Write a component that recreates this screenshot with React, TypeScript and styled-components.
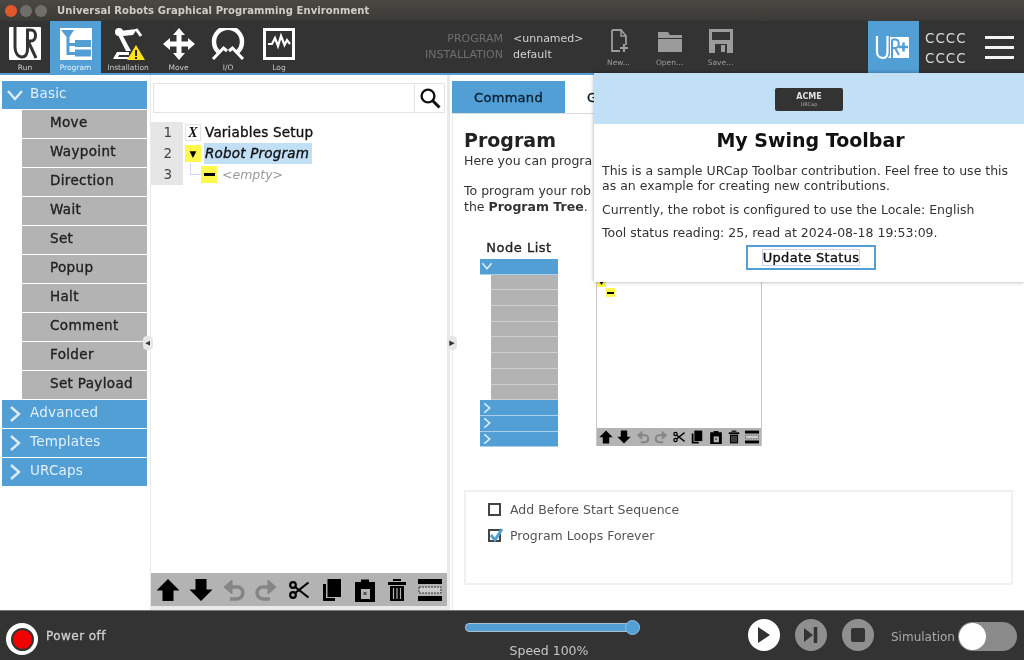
import React from "react";
import styled, { createGlobalStyle } from "styled-components";

const blue = "#529fd6";
const lightBlue = "#c1dff5";
const dark = "#333333";
const gray = "#b3b3b3";

const Global = createGlobalStyle`
  html, body {
    margin: 0;
    padding: 0;
    width: 1024px;
    height: 660px;
    overflow: hidden;
    background: #fff;
  }
  * { box-sizing: border-box; }
`;

const basicItems = ["Move", "Waypoint", "Direction", "Wait", "Set", "Popup", "Halt", "Comment", "Folder", "Set Payload"];
const closedGroups = ["Advanced", "Templates", "URCaps"];

const Chevron = ({ open, size = 18 }: { open?: boolean; size?: number }) => (
  <svg width={size} height={size} viewBox="0 0 18 18" fill="none" stroke="#dcedf9" strokeWidth="2.4">
    <path d={open ? "M2 5 L9 13 L16 5" : "M5 2 L13 9 L5 16"} />
  </svg>
);

const ToolIcon = ({ name, size }: { name: string; size: number }) => {
  const shapes: Record<string, React.ReactNode> = {
    up: <path d="M12 1 L23.5 12.5 H17.5 V23 H6.5 V12.5 H.5Z" fill="#000" />,
    down: <path d="M12 23 L23.5 11.5 H17.5 V1 H6.5 V11.5 H.5Z" fill="#000" />,
    undo: (
      <g fill="none" stroke="#858585">
        <path d="M7 9 H15 C23 9 23 21 14 21 H8" strokeWidth="3.6" />
        <path d="M10 2 L2 9 L10 16Z" fill="#858585" strokeWidth="1" />
      </g>
    ),
    redo: (
      <g fill="none" stroke="#858585">
        <path d="M17 9 H9 C1 9 1 21 10 21 H16" strokeWidth="3.6" />
        <path d="M14 2 L22 9 L14 16Z" fill="#858585" strokeWidth="1" />
      </g>
    ),
    cut: (
      <g fill="none" stroke="#000" strokeWidth="2.2">
        <circle cx="6" cy="7" r="2.8" />
        <circle cx="6" cy="17" r="2.8" />
        <path d="M8.2 9 L21.5 19.5 M8.2 15 L21.5 4.5" />
      </g>
    ),
    copy: (
      <g>
        <path d="M3 6 H6 V20 H15 V23 H3Z" fill="#000" />
        <rect x="7.5" y="1" width="13.5" height="18" fill="#000" />
      </g>
    ),
    paste: (
      <g>
        <path d="M2 4 H8 V1.5 H16 V4 H22 V24 H2Z" fill="#000" />
        <rect x="8" y="11" width="9" height="10" fill={gray} />
        <rect x="10.5" y="14" width="3" height="3" fill="#555" />
      </g>
    ),
    trash: (
      <g fill="#000">
        <rect x="8" y="1" width="8" height="2" />
        <rect x="3" y="4" width="18" height="3" />
        <path d="M5 8 H19 V23 H5Z" />
        <path d="M8.5 10 V21 M12 10 V21 M15.5 10 V21" stroke={gray} strokeWidth="1.2" />
      </g>
    ),
    suppress: (
      <g>
        <rect x="0" y="1" width="24" height="5" fill="#000" />
        <rect x="1" y="9" width="22" height="6" fill="#ccc" stroke="#333" strokeDasharray="2 1" strokeWidth="1" />
        <rect x="0" y="18" width="24" height="5" fill="#000" />
      </g>
    ),
  };
  return (
    <svg width={size} height={size} viewBox="0 0 24 24">
      {shapes[name]}
    </svg>
  );
};

const toolNames = ["up", "down", "undo", "redo", "cut", "copy", "paste", "trash", "suppress"];

const UrLogo = ({ plus }: { plus?: boolean }) => {
  return plus ? (
    <svg width="34" height="25" viewBox="0 0 34 25">
      <path d="M2 1 V17 C2 21 5 23 8 23 C11 23 12.5 21 12.5 17 V1" fill="none" stroke="#fff" strokeWidth="2.2" />
      <path d="M15 2 H33 a1 1 0 0 1 1 1 V23 H13 C15 21 15 19 15 17Z" fill="#fff" />
      <path d="M17 4.5 V23 M17 4.5 H20 C25 4.5 25 13 20 13 H17 M20 13 L24 20" fill="none" stroke={blue} strokeWidth="2" />
      <path d="M28.5 7.5 V16.5 M24 12 H33" stroke={blue} strokeWidth="2.6" />
    </svg>
  ) : (
    <svg width="32" height="33" viewBox="0 0 32 33">
      <rect width="32" height="33" rx="1" fill="#fff" />
      <path d="M6 0 V20 C6 26 9 30 13 30 C17 30 18.5 26 18.5 22 V3 H22 C28 3 28 14 22 14 H19 L27 31" fill="none" stroke={dark} strokeWidth="3" />
    </svg>
  );
};

const ProgramGlyph = () => (
  <svg width="32" height="32" viewBox="0 0 32 32">
    <rect width="32" height="32" fill="#fff" />
    <path d="M1 2 H14 L9.5 9 V15 H15 V18 H9.5 V24 H15 V27 H6.5 V9Z" fill={blue} />
    <rect x="15" y="12" width="16" height="7" fill={blue} />
    <rect x="15" y="21.5" width="16" height="7" fill={blue} />
  </svg>
);

const InstallGlyph = () => (
  <svg width="34" height="34" viewBox="0 0 34 34">
    <path d="M8 5 L26 3 L22 9 L12 10 L20 25 H15 L7 9Z" fill="#fff" />
    <circle cx="8" cy="6" r="4" fill="#fff" />
    <path d="M25 3 L30 10" stroke="#fff" strokeWidth="3" />
    <path d="M2 33 L6 26 H18 V29 H8 L7 31 H18 V33Z" fill="#fff" />
    <path d="M25 19 L34 34 H16Z" fill="#ffe21a" />
    <path d="M25 24 V30 M25 31 V33" stroke="#222" strokeWidth="2" />
  </svg>
);

const MoveGlyph = () => (
  <svg width="32" height="32" viewBox="0 0 32 32">
    <path d="M16 0 L22 7 H18.5 V13.5 H25 V10 L32 16 L25 22 V18.5 H18.5 V25 H22 L16 32 L10 25 H13.5 V18.5 H7 V22 L0 16 L7 10 V13.5 H13.5 V7 H10Z" fill="#fff" />
  </svg>
);

const IoGlyph = () => (
  <svg width="34" height="32" viewBox="0 0 34 32" fill="none" stroke="#fff">
    <path d="M7.5 24 A14 14 0 1 1 26.5 24" strokeWidth="4.4" />
    <path d="M2 31 L12.5 20 L16 23 M32 31 L21.5 20 L18 23" strokeWidth="3" />
  </svg>
);

const LogGlyph = () => (
  <svg width="32" height="32" viewBox="0 0 32 32">
    <rect x="1.5" y="1.5" width="29" height="29" fill={dark} stroke="#fff" strokeWidth="3" />
    <path d="M5 16 L9 16 L12 10 L15 18 L18 8 L21.5 17 L24 12 L27 16" fill="none" stroke="#fff" strokeWidth="2.2" />
  </svg>
);

const NewGlyph = () => (
  <svg width="18" height="24" viewBox="0 0 18 24">
    <path d="M2 1 H11 L16 7 V16 M10 22 H2 V1" fill="none" stroke="#9b9b9b" strokeWidth="1.8" />
    <path d="M11 1 V7 H16" fill="none" stroke="#9b9b9b" strokeWidth="1.5" />
    <path d="M14 15 V23 M10 19 H18" stroke="#9b9b9b" strokeWidth="2.2" />
  </svg>
);

const OpenGlyph = () => (
  <svg width="24" height="22" viewBox="0 0 24 22">
    <path d="M0 1 H10 L12 4 H24 V7 H0Z" fill="#9b9b9b" />
    <path d="M0 8 H24 V21 H0Z" fill="#9b9b9b" />
  </svg>
);

const SaveGlyph = () => (
  <svg width="24" height="24" viewBox="0 0 24 24">
    <path d="M0 0 H24 V24 H0Z" fill="#9b9b9b" />
    <rect x="3" y="3" width="18" height="8" fill={dark} />
    <rect x="6" y="15" width="12" height="9" fill={dark} />
    <rect x="12" y="16" width="4" height="7" fill="#9b9b9b" />
  </svg>
);

const SearchGlyph = () => (
  <svg width="22" height="22" viewBox="0 0 22 22" fill="none" stroke="#111">
    <circle cx="9" cy="9" r="6.4" strokeWidth="2.4" />
    <path d="M13.5 13.5 L20.5 20.5" strokeWidth="3" />
  </svg>
);

const App = () => (
  <Page>
    <Global />
    <TitleBar>
      <WindowDot $color="#e2582c" />
      <WindowDot $color="#6f6e68" />
      <WindowDot $color="#6f6e68" />
      <WindowTitle>Universal Robots Graphical Programming Environment</WindowTitle>
    </TitleBar>

    <Header>
      <NavTab $width={50}><UrLogo /><NavLabel>Run</NavLabel></NavTab>
      <NavTab $width={51} $active><ProgramGlyph /><NavLabel $active>Program</NavLabel></NavTab>
      <NavTab $width={54}><InstallGlyph /><NavLabel>Installation</NavLabel></NavTab>
      <NavTab $width={47}><MoveGlyph /><NavLabel>Move</NavLabel></NavTab>
      <NavTab $width={52}><IoGlyph /><NavLabel>I/O</NavLabel></NavTab>
      <NavTab $width={50}><LogGlyph /><NavLabel>Log</NavLabel></NavTab>

      <FileInfo>
        <InfoKey>PROGRAM</InfoKey>
        <InfoValue>&lt;unnamed&gt;</InfoValue>
        <InfoKey>INSTALLATION</InfoKey>
        <InfoValue>default</InfoValue>
      </FileInfo>

      <FileActions>
        <FileAction><NewGlyph /><NavLabel $dim>New...</NavLabel></FileAction>
        <FileAction><OpenGlyph /><NavLabel $dim>Open...</NavLabel></FileAction>
        <FileAction><SaveGlyph /><NavLabel $dim>Save...</NavLabel></FileAction>
      </FileActions>

      <UrCapButton><UrLogo plus /></UrCapButton>
      <CcccStack><span>CCCC</span><span>CCCC</span></CcccStack>
      <Hamburger><i /><i /><i /></Hamburger>
    </Header>

    <Main>
      <Library>
        <GroupHeader><Chevron open /><span>Basic</span></GroupHeader>
        {basicItems.map((item) => (
          <LibraryItem key={item}>{item}</LibraryItem>
        ))}
        {closedGroups.map((g) => (
          <GroupHeader key={g}><Chevron /><span>{g}</span></GroupHeader>
        ))}
        <SideHandle $right={-3}>◂</SideHandle>
      </Library>

      <TreePanel>
        <SearchRow>
          <SearchField />
          <SearchButton><SearchGlyph /></SearchButton>
        </SearchRow>
        <Tree>
          <TreeRow>
            <LineNo>1</LineNo>
            <VarBox>X</VarBox>
            <TreeText>Variables Setup</TreeText>
          </TreeRow>
          <TreeRow>
            <LineNo>2</LineNo>
            <YellowBox>▼</YellowBox>
            <TreeText $selected>Robot Program</TreeText>
          </TreeRow>
          <TreeRow>
            <LineNo>3</LineNo>
            <Connector />
            <YellowBox><Dash /></YellowBox>
            <EmptyText>&lt;empty&gt;</EmptyText>
          </TreeRow>
        </Tree>
        <TreeToolbar>
          {toolNames.map((n) => (
            <ToolIcon key={n} name={n} size={24} />
          ))}
        </TreeToolbar>
        <SideHandle $right={-10}>▸</SideHandle>
      </TreePanel>

      <CommandPanel>
        <Tabs>
          <Tab $active $width={113}>Command</Tab>
          <Tab $width={28} $indent={21}>G</Tab>
        </Tabs>
        <Content>
          <Heading>Program</Heading>
          <Para>Here you can progra</Para>
          <Para $gap>To program your rob</Para>
          <Para>the <b>Program Tree</b>.</Para>

          <Preview>
            <NodeList>
              <NodeTitle>Node List</NodeTitle>
              <MiniGroup><Chevron open size={12} /></MiniGroup>
              {basicItems.slice(0, 8).map((item) => (
                <MiniItem key={item} />
              ))}
              {closedGroups.map((g) => (
                <MiniGroup key={g}><Chevron size={12} /></MiniGroup>
              ))}
            </NodeList>
            <MiniTree>
              <MiniRows>
                <MiniYellow $indent={0}>
                  <svg width="5" height="4" viewBox="0 0 5 4"><path d="M0 0 H5 L2.5 4Z" fill="#000" /></svg>
                </MiniYellow>
                <MiniYellow $indent={9}><Dash $small /></MiniYellow>
              </MiniRows>
              <MiniToolbar>
                {toolNames.map((n) => (
                  <ToolIcon key={n} name={n} size={14} />
                ))}
              </MiniToolbar>
            </MiniTree>
          </Preview>

          <OptionsBox>
            <Option>
              <Check />
              <span>Add Before Start Sequence</span>
            </Option>
            <Option>
              <Check>
                <svg width="16" height="16" viewBox="0 0 16 16" fill="none" stroke={blue} strokeWidth="3">
                  <path d="M2 7 L6 12 L13 1" />
                </svg>
              </Check>
              <span>Program Loops Forever</span>
            </Option>
          </OptionsBox>
        </Content>
      </CommandPanel>
    </Main>

    <Footer>
      <PowerGroup>
        <PowerButton><i /></PowerButton>
        <PowerText>Power off</PowerText>
      </PowerGroup>
      <SpeedGroup>
        <SpeedTrack><SpeedKnob /></SpeedTrack>
        <SpeedLabel>Speed 100%</SpeedLabel>
      </SpeedGroup>
      <Controls>
        <RoundButton $bg="#fff">
          <svg width="14" height="18" viewBox="0 0 14 18"><path d="M1 1 L13 9 L1 17Z" fill={dark} /></svg>
        </RoundButton>
        <RoundButton $bg="#8f8f8f">
          <svg width="16" height="18" viewBox="0 0 16 18"><path d="M1 2 L10 9 L1 16Z" fill={dark} /><path d="M12.5 1 V17" stroke={dark} strokeWidth="3.5" /></svg>
        </RoundButton>
        <RoundButton $bg="#8f8f8f">
          <svg width="16" height="16" viewBox="0 0 16 16"><rect x="1" y="1" width="14" height="14" rx="2" fill={dark} /></svg>
        </RoundButton>
        <SimLabel>Simulation</SimLabel>
        <SimToggle><SimKnob /></SimToggle>
      </Controls>
    </Footer>

    <Popover>
      <PopoverHead>
        <AcmeLogo><b>ACME</b><small>URCap</small></AcmeLogo>
      </PopoverHead>
      <PopoverTitle>My Swing Toolbar</PopoverTitle>
      <PopoverText $top={11}>
        This is a sample URCap Toolbar contribution. Feel free to use this as an example for creating new contributions.
      </PopoverText>
      <PopoverText $top={9}>Currently, the robot is configured to use the Locale: English</PopoverText>
      <PopoverText $top={8}>Tool status reading: 25, read at 2024-08-18 19:53:09.</PopoverText>
      <UpdateButton><span>Update Status</span></UpdateButton>
    </Popover>
  </Page>
);

export default App;

const Page = styled.div`
  position: relative;
  width: 1024px;
  height: 660px;
  display: flex;
  flex-direction: column;
  overflow: hidden;
  font-family: "DejaVu Sans", sans-serif;
  filter: blur(0.5px);
`;

const TitleBar = styled.div`
  height: 21px;
  flex: none;
  display: flex;
  align-items: center;
  gap: 3px;
  padding-left: 5px;
  background: linear-gradient(#4a4843, #3b3a36);
`;

const WindowDot = styled.div<{ $color: string }>`
  width: 12px;
  height: 12px;
  border-radius: 50%;
  background: ${(p) => p.$color};
`;

const WindowTitle = styled.div`
  margin-left: 7px;
  font-size: 10px;
  font-weight: 700;
  letter-spacing: 0.08px;
  color: #cfcdc6;
  white-space: nowrap;
`;

const Header = styled.div`
  height: 54px;
  flex: none;
  display: flex;
  background: ${dark};
  border-bottom: 2px solid ${blue};
`;

const NavTab = styled.div<{ $width: number; $active?: boolean }>`
  width: ${(p) => p.$width}px;
  display: flex;
  flex-direction: column;
  align-items: center;
  justify-content: flex-end;
  gap: 3px;
  background: ${(p) => (p.$active ? blue : "transparent")};
`;

const NavLabel = styled.div<{ $active?: boolean; $dim?: boolean }>`
  font-size: 7.5px;
  line-height: 10px;
  color: ${(p) => (p.$active ? "#e8f3fb" : p.$dim ? "#9a9a9a" : "#c8c8c8")};
`;

const FileInfo = styled.div`
  width: 176px;
  margin-left: 113px;
  padding-top: 10px;
  display: grid;
  grid-template-columns: 86px 1fr;
  column-gap: 10px;
  align-content: start;
  line-height: 16px;
  font-size: 11px;
`;

const InfoKey = styled.span`
  text-align: right;
  color: #6f6f6f;
  white-space: nowrap;
  justify-self: end;
`;

const InfoValue = styled.span`
  color: #d2d2d2;
`;

const FileActions = styled.div`
  display: flex;
  width: 153px;
`;

const FileAction = styled.div`
  width: 51px;
  display: flex;
  flex-direction: column;
  align-items: center;
  justify-content: flex-end;
  gap: 5px;
  padding-bottom: 5px;
`;

const UrCapButton = styled.div`
  width: 51px;
  margin-left: auto;
  padding-right: 3px;
  display: flex;
  align-items: center;
  justify-content: center;
  background: ${blue};
`;

const CcccStack = styled.div`
  width: 60px;
  padding: 9px 0 0 6px;
  display: flex;
  flex-direction: column;
  gap: 4px;
  font-size: 13.5px;
  line-height: 16px;
  letter-spacing: 1px;
  color: #d8d8d8;
`;

const Hamburger = styled.div`
  width: 45px;
  padding: 15px 10px 0 6px;
  display: flex;
  flex-direction: column;
  gap: 7px;
  i {
    display: block;
    height: 3px;
    background: #f2f2f2;
  }
`;

const Main = styled.div`
  flex: 1;
  min-height: 0;
  display: flex;
  background: #fff;
`;

const Library = styled.div`
  position: relative;
  width: 150px;
  flex: none;
  padding: 6px 3px 0 2px;
  display: flex;
  flex-direction: column;
  gap: 1px;
`;

const GroupHeader = styled.div`
  height: 28px;
  display: flex;
  align-items: center;
  gap: 6px;
  padding-left: 4px;
  background: ${blue};
  color: #e3f0fa;
  font-size: 13.5px;
  letter-spacing: 0.2px;
  span {
    padding-bottom: 4px;
  }
`;

const LibraryItem = styled.div`
  height: 28px;
  margin-left: 20px;
  padding: 0 0 4px 28px;
  display: flex;
  align-items: center;
  background: ${gray};
  color: #222;
  font-size: 13.5px;
  letter-spacing: 0.35px;
  -webkit-text-stroke: 0.35px #222;
`;

const SideHandle = styled.div<{ $right: number }>`
  position: absolute;
  right: ${(p) => p.$right}px;
  top: 261px;
  width: 10px;
  height: 14px;
  border-radius: 4px;
  background: #e6e6e6;
  color: #333;
  font-size: 11px;
  line-height: 14px;
  text-align: center;
`;

const TreePanel = styled.div`
  position: relative;
  width: 300px;
  margin-right: 2px;
  flex: none;
  display: flex;
  flex-direction: column;
  padding-top: 8px;
  border-left: 1px solid #eaeaea;
  border-right: 3px solid #eaeaea;
  border-bottom: 4px solid #eaeaea;
`;

const SearchRow = styled.div`
  height: 30px;
  margin: 0 2px;
  flex: none;
  display: flex;
  border: 1px solid #e4e4e4;
`;

const SearchField = styled.div`
  flex: 1;
  border-right: 1px solid #e4e4e4;
`;

const SearchButton = styled.div`
  width: 29px;
  display: flex;
  align-items: center;
  justify-content: center;
`;

const Tree = styled.div`
  flex: 1;
  padding-top: 9px;
`;

const TreeRow = styled.div`
  height: 21px;
  display: flex;
  align-items: center;
`;

const LineNo = styled.div`
  width: 32px;
  height: 100%;
  margin-right: 2px;
  padding-right: 11px;
  flex: none;
  background: #e6e6e6;
  color: #444;
  font-size: 13.5px;
  line-height: 21px;
  text-align: right;
`;

const VarBox = styled.div`
  width: 16px;
  height: 17px;
  flex: none;
  border: 1px solid #e2e2e2;
  font-family: "Liberation Serif", serif;
  font-style: italic;
  font-weight: 700;
  font-size: 14px;
  line-height: 15px;
  text-align: center;
  color: #111;
`;

const YellowBox = styled.div`
  width: 16px;
  height: 17px;
  flex: none;
  display: flex;
  align-items: center;
  justify-content: center;
  background: #fff94d;
  font-size: 9px;
  color: #000;
`;

const Connector = styled.div`
  width: 16px;
  height: 12px;
  flex: none;
  margin: -12px -5px 0 5px;
  border-left: 1px solid #cfd6f2;
  border-bottom: 1px solid #cfd6f2;
`;

const Dash = styled.div<{ $small?: boolean }>`
  width: ${(p) => (p.$small ? 7 : 11)}px;
  height: ${(p) => (p.$small ? 2 : 3)}px;
  background: #000;
`;

const TreeText = styled.div<{ $selected?: boolean }>`
  margin-left: 3px;
  padding: 0 3px 0 1px;
  height: 21px;
  line-height: 21px;
  font-size: 13.5px;
  letter-spacing: 0.2px;
  color: #111;
  -webkit-text-stroke: 0.35px #111;
  font-style: ${(p) => (p.$selected ? "italic" : "normal")};
  background: ${(p) => (p.$selected ? lightBlue : "transparent")};
`;

const EmptyText = styled.div`
  margin-left: 5px;
  font-size: 12.5px;
  font-style: italic;
  color: #9a9a9a;
`;

const TreeToolbar = styled.div`
  height: 33px;
  flex: none;
  display: flex;
  align-items: center;
  justify-content: space-between;
  padding: 0 5px 0 5px;
  background: ${gray};
`;

const CommandPanel = styled.div`
  flex: 1;
  min-width: 0;
  display: flex;
  flex-direction: column;
  padding-top: 6px;
`;

const Tabs = styled.div`
  height: 33px;
  flex: none;
  display: flex;
  gap: 1px;
  border-bottom: 1px solid #dcdcdc;
`;

const Tab = styled.div<{ $active?: boolean; $width: number; $indent?: number }>`
  width: ${(p) => p.$width}px;
  padding-left: ${(p) => p.$indent ?? 0}px;
  display: flex;
  align-items: center;
  justify-content: ${(p) => (p.$indent ? "flex-start" : "center")};
  background: ${(p) => (p.$active ? blue : "#fff")};
  color: #0c1e2c;
  font-size: 13px;
  letter-spacing: 0.3px;
  -webkit-text-stroke: 0.35px #0c1e2c;
`;

const Content = styled.div`
  flex: 1;
  min-height: 0;
  display: flex;
  flex-direction: column;
  padding: 14px 11px 25px 11px;
  border-left: 1px solid #eaeaea;
`;

const Heading = styled.div`
  font-size: 19px;
  line-height: 24px;
  font-weight: 700;
  color: #222;
`;

const Para = styled.div<{ $gap?: boolean }>`
  margin-top: ${(p) => (p.$gap ? 15 : 0)}px;
  padding-top: ${(p) => (p.$gap ? 0 : 1)}px;
  font-size: 12.5px;
  line-height: 15px;
  color: #333;
  white-space: nowrap;
`;

const Preview = styled.div`
  margin-top: 26px;
  display: flex;
  gap: 38px;
  padding-left: 16px;
`;

const NodeList = styled.div`
  width: 78px;
  display: flex;
  flex-direction: column;
`;

const NodeTitle = styled.div`
  height: 19px;
  font-size: 13px;
  line-height: 15px;
  letter-spacing: 0.5px;
  text-align: center;
  white-space: nowrap;
  color: #222;
  -webkit-text-stroke: 0.35px #222;
`;

const MiniGroup = styled.div`
  height: 15.7px;
  display: flex;
  align-items: center;
  padding-left: 1px;
  background: ${blue};
  border-bottom: 1px solid #a9cfea;
`;

const MiniItem = styled.div`
  height: 15.7px;
  margin-left: 11px;
  background: ${gray};
  border-bottom: 1px solid #cfcfcf;
`;

const MiniTree = styled.div`
  width: 166px;
  height: 206px;
  display: flex;
  flex-direction: column;
  border: 1px solid #c8c8c8;
  border-bottom: none;
`;

const MiniRows = styled.div`
  flex: 1;
  padding-top: 37px;
`;

const MiniYellow = styled.div<{ $indent: number }>`
  width: 9px;
  height: 9px;
  margin: 0 0 1px ${(p) => p.$indent}px;
  display: flex;
  align-items: center;
  justify-content: center;
  background: #fff94d;
`;

const MiniToolbar = styled.div`
  height: 18px;
  flex: none;
  display: flex;
  align-items: center;
  justify-content: space-between;
  padding: 0 2px;
  background: ${gray};
`;

const OptionsBox = styled.div`
  height: 95px;
  margin-top: auto;
  padding: 4px 0 0 22px;
  border: 2px solid #f0f0f0;
`;

const Option = styled.div`
  height: 26px;
  display: flex;
  align-items: center;
  gap: 9px;
  font-size: 12.5px;
  color: #555;
`;

const Check = styled.div`
  position: relative;
  width: 13px;
  height: 13px;
  flex: none;
  border: 2px solid #444;
  svg {
    position: absolute;
    left: -1px;
    top: -3px;
  }
`;

const Footer = styled.div`
  height: 50px;
  flex: none;
  display: flex;
  background: ${dark};
  border-top: 1px solid #777;
`;

const PowerGroup = styled.div`
  width: 466px;
  display: flex;
  padding: 12px 0 0 6px;
  gap: 8px;
`;

const PowerButton = styled.div`
  width: 32px;
  height: 32px;
  display: flex;
  align-items: center;
  justify-content: center;
  border-radius: 50%;
  background: #fff;
  i {
    width: 23px;
    height: 23px;
    border-radius: 50%;
    border: 2px solid #333;
    background: #f00000;
  }
`;

const PowerText = styled.div`
  font-size: 12px;
  line-height: 30px;
  height: 30px;
  margin-top: -2px;
  color: #cfcfcf;
  letter-spacing: 0.45px;
  -webkit-text-stroke: 0.3px #cfcfcf;
`;

const SpeedGroup = styled.div`
  width: 174px;
  padding-top: 13px;
`;

const SpeedTrack = styled.div`
  position: relative;
  height: 7px;
  width: 166px;
  border-radius: 4px;
  background: ${blue};
  box-shadow: 0 0 0 1px #a9bfd0;
`;

const SpeedKnob = styled.div`
  position: absolute;
  right: -8px;
  top: -4px;
  width: 15px;
  height: 15px;
  border-radius: 50%;
  background: ${blue};
  border: 1px solid #8fc0e4;
`;

const SpeedLabel = styled.div`
  margin-top: 12px;
  width: 166px;
  font-size: 12.5px;
  line-height: 15px;
  text-align: center;
  color: #c8c8c8;
`;

const Controls = styled.div`
  flex: 1;
  display: flex;
  align-items: flex-start;
  padding: 8px 7px 0 108px;
`;

const RoundButton = styled.div<{ $bg: string }>`
  width: 32px;
  height: 32px;
  margin-right: 15px;
  display: flex;
  align-items: center;
  justify-content: center;
  border-radius: 50%;
  background: ${(p) => p.$bg};
`;

const SimLabel = styled.div`
  margin: 10px 0 0 2px;
  font-size: 12px;
  line-height: 16px;
  color: #a8a8a8;
`;

const SimToggle = styled.div`
  width: 59px;
  height: 29px;
  margin: 3px 0 0 auto;
  padding: 1px 0 0 1px;
  border-radius: 15px;
  background: #8a8a8a;
`;

const SimKnob = styled.div`
  width: 27px;
  height: 27px;
  border-radius: 50%;
  background: #fff;
`;

const Popover = styled.div`
  position: absolute;
  top: 73px;
  right: 0;
  width: 430px;
  height: 209px;
  display: flex;
  flex-direction: column;
  background: #fff;
  box-shadow: 0 0 4px rgba(0, 0, 0, 0.35);
`;

const PopoverHead = styled.div`
  height: 51px;
  flex: none;
  display: flex;
  align-items: center;
  justify-content: center;
  padding-top: 1px;
  background: ${lightBlue};
`;

const AcmeLogo = styled.div`
  width: 68px;
  height: 23px;
  display: flex;
  flex-direction: column;
  align-items: center;
  justify-content: center;
  border-radius: 2px;
  background: ${dark};
  color: #e0e0e0;
  b {
    font-size: 8px;
    line-height: 9px;
  }
  small {
    font-size: 5px;
    line-height: 6px;
    color: #aaa;
  }
`;

const PopoverTitle = styled.div`
  margin-top: 4px;
  padding-left: 3px;
  font-size: 19px;
  line-height: 24px;
  font-weight: 700;
  text-align: center;
  color: #111;
`;

const PopoverText = styled.div<{ $top: number }>`
  margin: ${(p) => p.$top}px 8px 0;
  font-size: 12.5px;
  line-height: 15px;
  color: #333;
`;

const UpdateButton = styled.div`
  width: 130px;
  height: 25px;
  margin: 5px 0 0 152px;
  display: flex;
  align-items: center;
  justify-content: center;
  border: 2px solid ${blue};
  font-size: 13px;
  letter-spacing: 0.3px;
  white-space: nowrap;
  color: #111;
  -webkit-text-stroke: 0.35px #111;
  span {
    outline: 1px solid #d0d0f0;
  }
`;
